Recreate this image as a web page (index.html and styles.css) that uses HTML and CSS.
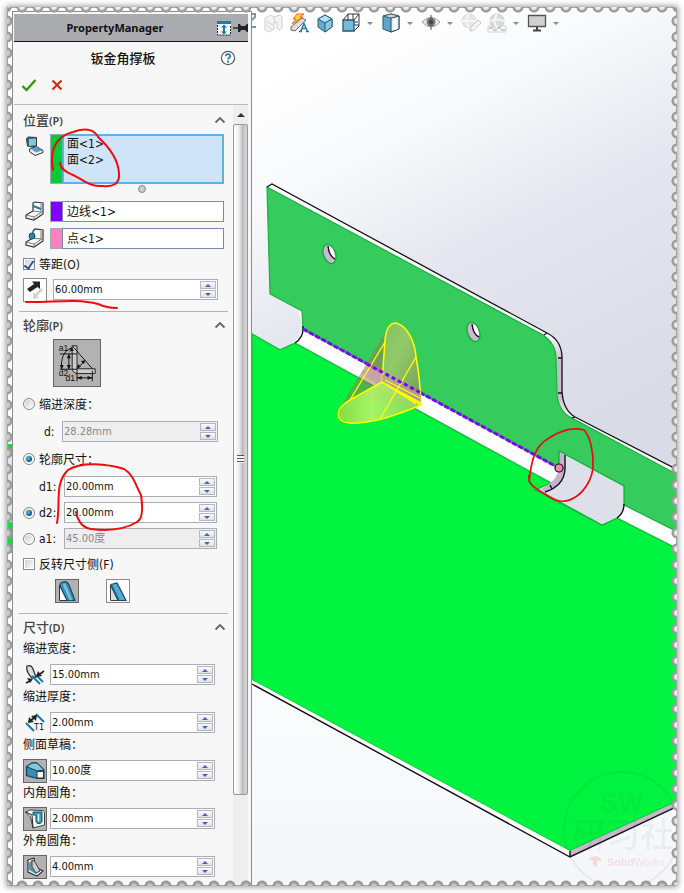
FILE: index.html
```html
<!DOCTYPE html>
<html lang="zh-CN">
<head>
<meta charset="utf-8">
<meta name="viewport" content="width=device-width, initial-scale=1">
<title>PropertyManager</title>
<link rel="stylesheet" href="styles.css">
</head>
<body>
<div class="stamp">
  <aside class="panel">
    <header class="panel-bar">
      <h1>PropertyManager</h1>
      <svg class="bar-icon" viewBox="0 0 16 16"><rect x="1" y="2" width="14" height="13" fill="#f4f4f4"/><path d="M1.5 5v10h13V5" fill="none" stroke="#222" stroke-dasharray="2 1"/><rect x="1" y="1" width="14" height="3" fill="#1f7ba6"/><path d="M8 4.500l3 3H9v4h2l-3 3-3-3h2v-4H5z" fill="#1f7ba6"/></svg>
      <svg class="pin-icon" viewBox="0 0 16 16"><path d="M1 8h6" stroke="#222" stroke-width="1.4"/><path d="M6 4h2l1 2h4l2-2h1v8h-1l-2-2H9l-1 2H6z" fill="#222"/></svg>
    </header>
    <div class="feature-title">
      <h2>钣金角撑板</h2>
      <button class="plain help" aria-label="帮助"><svg viewBox="0 0 16 16"><circle cx="8" cy="8" r="6.6" fill="#fff" stroke="#555c66" stroke-width="1.2"/><path d="M5.9 6.3c0-2.8 4.3-2.8 4.3-.2 0 1.6-2.2 1.7-2.2 3.4" fill="none" stroke="#1f7ba6" stroke-width="1.7"/><circle cx="8" cy="11.7" r="1.1" fill="#1f7ba6"/></svg></button>
    </div>
    <div class="confirm">
      <button class="plain" aria-label="确定"><svg viewBox="0 0 16 16"><path d="M1.5 9l4 4L14.500 3" fill="none" stroke="#2f9a12" stroke-width="2.4"/></svg></button>
      <button class="plain" aria-label="取消"><svg viewBox="0 0 16 16"><path d="M3.500 3.500l9 9M12.500 3.500l-9 9" fill="none" stroke="#dc2a0c" stroke-width="2.200"/></svg></button>
    </div>

    <div class="scroll-area">
      <div class="sections">
        <section class="section first">
          <button class="section-head"><span>位置<small>(P)</small></span><svg viewBox="0 0 12 8"><path d="M1.500 6.500L6 2l4.500 4.500" fill="none" stroke="#666" stroke-width="1.800"/></svg></button>
          <div class="section-body">
            <div class="pick tall">
              <svg class="row-icon" viewBox="0 0 20 20"><path d="M1.500 2.500l2-1.500 8 .5v8l-2 2-7-1.500z" fill="#2c6987" stroke="#333"/><path d="M4 3l7-.5v6.500l-7 1z" fill="#8bc3dc"/><path d="M4.500 13l7-2.500 6.500 4v2l-8 3-5.500-4z" fill="#eee" stroke="#333"/><path d="M6 13l6-2 5 3.500-6 2z" fill="#4ea3cb"/></svg>
              <span class="swatch green"></span>
              <textarea aria-label="支撑面" readonly>面&lt;1&gt;
面&lt;2&gt;</textarea>
            </div>
            <div class="grip-dot"></div>
            <div class="pick">
              <svg class="row-icon" viewBox="0 0 20 20"><path d="M1 14l7-4V2l2-1 8 1v11l-9 6-8-2z" fill="#fafafa" stroke="#333" stroke-width="1.200"/><path d="M8 10l8 1V3M1 14l8 2 8-5M9 16v3" fill="none" stroke="#777"/><path d="M8 5l8 3" stroke="#167cab" stroke-width="2"/></svg>
              <span class="swatch purple"></span>
              <input type="text" value="边线&lt;1&gt;" aria-label="边线">
            </div>
            <div class="pick">
              <svg class="row-icon" viewBox="0 0 20 20"><path d="M1 14l7-4V3l2-2 8 1v11l-9 6-8-2z" fill="#fafafa" stroke="#333" stroke-width="1.200"/><path d="M8 10l8 1V3M1 14l8 2 8-5M9 16v3" fill="none" stroke="#777"/><circle cx="7" cy="8" r="3" fill="#248ab8" stroke="#174b62"/></svg>
              <span class="swatch pink"></span>
              <input type="text" value="点&lt;1&gt;" aria-label="点">
            </div>
            <label class="choice"><input type="checkbox" checked><span>等距<small>(O)</small></span></label>
            <div class="field offset-field">
              <button class="tool" aria-label="反向"><svg viewBox="0 0 22 22"><path d="M3 10l7-5-2-2.500h8V10l-2.500-2L6 13z" fill="#222"/><path d="M19 11l-6 6 2 2.500H9V13l2 2 6-6z" fill="#d2d2d2"/></svg></button>
              <div class="spin"><input type="text" value="60.00mm" aria-label="等距值"><span class="steps"><button aria-label="增加"></button><button aria-label="减少" class="down"></button></span></div>
            </div>
          </div>
        </section>

        <section class="section">
          <button class="section-head"><span>轮廓<small>(P)</small></span><svg viewBox="0 0 12 8"><path d="M1.500 6.500L6 2l4.500 4.500" fill="none" stroke="#666" stroke-width="1.800"/></svg></button>
          <div class="section-body">
            <div class="diagram">
              <svg viewBox="0 0 48 48" font-family="Liberation Sans, sans-serif" font-size="9" fill="#111"><path d="M19 6h5v24h19v5H25c-4 0-6-2-6-6z" fill="#ccc" stroke="#222"/><path d="M19 6l21 24M6 14.500h18M6 30.500h18M24 30v13M40 32v11M24 39.500h16M15.500 15v15M19 8C10 11 7 19 8 30M25 29l7-7" fill="none" stroke="#111"/><path d="M15.500 14l-2 5h4zM15.500 31l-2-5h4zM8 31l-2-5h4zM24 39.500l5-2v4zM40 39.500l-5-2v4zM18 8l-2 4 5-1zM24 30l1-5 3 3zM33 21l-5 1 3 3z"/><text x="5" y="11">a1</text><text x="5" y="38">d2</text><text x="12" y="43">d1</text></svg>
            </div>
            <label class="choice option"><input type="radio" name="profile"><span>缩进深度<span class="colon">：</span></span></label>
            <div class="field dim depth"><label for="depth">d:</label>
              <div class="spin off"><input id="depth" type="text" value="28.28mm" disabled><span class="steps"><button aria-label="增加"></button><button aria-label="减少" class="down"></button></span></div></div>
            <label class="choice option"><input type="radio" name="profile" checked><span>轮廓尺寸<span class="colon">：</span></span></label>
            <div class="dims">
              <div class="field dim"><i></i><label for="d1">d1:</label>
                <div class="spin"><input id="d1" type="text" value="20.00mm"><span class="steps"><button aria-label="增加"></button><button aria-label="减少" class="down"></button></span></div></div>
              <div class="field dim"><input type="radio" name="leg" checked aria-label="d2"><label for="d2">d2:</label>
                <div class="spin"><input id="d2" type="text" value="20.00mm"><span class="steps"><button aria-label="增加"></button><button aria-label="减少" class="down"></button></span></div></div>
              <div class="field dim"><input type="radio" name="leg" aria-label="a1"><label for="a1">a1:</label>
                <div class="spin off"><input id="a1" type="text" value="45.00度" disabled><span class="steps"><button aria-label="增加"></button><button aria-label="减少" class="down"></button></span></div></div>
            </div>
            <label class="choice"><input type="checkbox"><span>反转尺寸侧<small>(F)</small></span></label>
            <div class="shapes">
              <button class="tool active" aria-label="圆形缩进"><svg viewBox="0 0 22 22"><path d="M3.500 5v15.500H12z" fill="#fff" stroke="#333"/><path d="M4 6c0-5 7-6 9-1l6 15.500h-8z" fill="#3b8fb6" stroke="#164a60" stroke-width="1.200"/><path d="M8 4l7 16" stroke="#7fc2dd" stroke-width="2.500"/></svg></button>
              <button class="tool" aria-label="平面缩进"><svg viewBox="0 0 22 22"><path d="M3.500 5v15.500H11z" fill="#ddd" stroke="#444"/><path d="M4 4.500L10 3l9 17.500h-8z" fill="#52aad0" stroke="#164a60" stroke-width="1.200"/><path d="M4 5l7.500 15" stroke="#1f5f7c" stroke-width="2"/></svg></button>
            </div>
          </div>
        </section>

        <section class="section sizes">
          <button class="section-head"><span>尺寸<small>(D)</small></span><svg viewBox="0 0 12 8"><path d="M1.500 6.500L6 2l4.500 4.500" fill="none" stroke="#666" stroke-width="1.800"/></svg></button>
          <div class="size"><label for="w">缩进宽度<span class="colon">：</span></label>
            <div class="field"><span class="tool bare"><svg viewBox="0 0 22 22"><path d="M3 2c3-1 5 0 6 3l3 8-4 1C4 10 2 6 3 2z" fill="#ddd" stroke="#333" stroke-width="1.300"/><path d="M8 12l8 8M12 11l7 7" stroke="#187aa6" stroke-width="1.800"/><path d="M20 7l-4 3" stroke="#222" stroke-width="1.600"/><path d="M12 13l2-6 4 5zM9 15l-6-1 3 5z" fill="#222"/><path d="M2 19l4-2" stroke="#222" stroke-width="1.600"/></svg></span>
            <div class="spin"><input id="w" type="text" value="15.00mm"><span class="steps"><button aria-label="增加"></button><button aria-label="减少" class="down"></button></span></div></div></div>
          <div class="size"><label for="t">缩进厚度<span class="colon">：</span></label>
            <div class="field"><span class="tool bare"><svg viewBox="0 0 22 22"><path d="M12 2l8 8M2 11l8 8" stroke="#187aa6" stroke-width="2"/><path d="M5 10l7-6" stroke="#222" stroke-width="2"/><path d="M13 3l-1 6-5-5zM4 11l1-6 5 5z" fill="#222"/><text x="10" y="18" font-family="DejaVu Sans Condensed, sans-serif" font-size="9" fill="#111">T1</text></svg></span>
            <div class="spin"><input id="t" type="text" value="2.00mm"><span class="steps"><button aria-label="增加"></button><button aria-label="减少" class="down"></button></span></div></div></div>
          <div class="size"><label for="s">侧面草稿<span class="colon">：</span></label>
            <div class="field"><button class="tool active" aria-label="侧面草稿"><svg viewBox="0 0 22 22"><path d="M2.500 6.500L8 3h5l7 7v8.500h-7l-10.500-3z" fill="#378eb8" stroke="#103e54" stroke-width="1.200"/><path d="M2.500 6.500L8 3h5l7 7-7 1z" fill="#86c5df" stroke="#103e54"/><path d="M13 11.500h6.500v6.500H13z" fill="#f6f6f6" stroke="#333"/></svg></button>
            <div class="spin"><input id="s" type="text" value="10.00度"><span class="steps"><button aria-label="增加"></button><button aria-label="减少" class="down"></button></span></div></div></div>
          <div class="size"><label for="in">内角圆角<span class="colon">：</span></label>
            <div class="field"><button class="tool active" aria-label="内角圆角"><svg viewBox="0 0 22 22"><path d="M1.500 4L6 2l13 .5 1.500 2V17L9 20 6.500 9z" fill="#f5f5f5" stroke="#444"/><path d="M1.500 4L8 7l1 13" fill="none" stroke="#222"/><path d="M9 4h9v9c0 3-6 4-6 0V7H9z" fill="#409bc0" stroke="#14516c"/><path d="M14.500 6v7" fill="none" stroke="#e3f2f8" stroke-width="1.500"/></svg></button>
            <div class="spin"><input id="in" type="text" value="2.00mm"><span class="steps"><button aria-label="增加"></button><button aria-label="减少" class="down"></button></span></div></div></div>
          <div class="size"><label for="out">外角圆角<span class="colon">：</span></label>
            <div class="field"><button class="tool active" aria-label="外角圆角"><svg viewBox="0 0 22 22"><path d="M4 4l6-2 1 9 8 4-6 5-9-4z" fill="#f7f7f7" stroke="#333" stroke-width="1.200"/><path d="M5 7c3-4 5-2 5 1l6 7-4 3-7-4z" fill="#469dc0"/><path d="M8 4l3 2 5 9-4 2-4-6z" fill="#ccc" stroke="#444"/></svg></button>
            <div class="spin"><input id="out" type="text" value="4.00mm"><span class="steps"><button aria-label="增加"></button><button aria-label="减少" class="down"></button></span></div></div></div>
        </section>
      </div>
      <div class="scrollbar"><span class="up"></span><div class="thumb"><span></span></div></div>
    </div>
    <svg class="marks" viewBox="12 11 240 875" width="240" height="875" fill="none" stroke="#f00c0c" stroke-width="2" stroke-linecap="round"><path d="M53 170C49 149 57 136 73 132C88 127 94 130 99 138C111 149 118 160 119 173C120 184 113 187 103 186C90 187 84 180 73 175C65 172 61 169 60 163"/><path d="M26 302C50 303 75 298 98 304Q107 308 117 308"/><path d="M57 523C61 501 54 484 68 470C82 461 108 464 124 469C133 474 136 486 141 495C143 508 143 519 137 522C124 530 107 531 91 529C81 528 77 518 76 512"/></svg>
  </aside>

  <main class="viewport">
    <svg class="scene" viewBox="252 8 424 877" preserveAspectRatio="xMinYMin slice">
      <defs>
        <linearGradient id="sky" gradientUnits="userSpaceOnUse" x1="300" y1="60" x2="500" y2="460"><stop offset="0" stop-color="#fff"/><stop offset=".25" stop-color="#f8f9fb"/><stop offset=".55" stop-color="#e4e7ef"/><stop offset="1" stop-color="#d9dce7"/></linearGradient>
        <linearGradient id="floor" x1="0" y1="0" x2="0" y2="1"><stop offset="0" stop-color="#fff"/><stop offset="1" stop-color="#f5f6fa"/></linearGradient>
        <linearGradient id="lobe" x1="0" y1="0" x2="1" y2="1"><stop offset="0" stop-color="#8fbf60"/><stop offset=".4" stop-color="#9dca69"/><stop offset="1" stop-color="#789557"/></linearGradient>
        <linearGradient id="foot" x1="0" y1="0" x2="1" y2="0"><stop offset="0" stop-color="#8fdd43"/><stop offset=".4" stop-color="#b7f56b"/><stop offset="1" stop-color="#8bd35a"/></linearGradient>
        <linearGradient id="bend" x1="0" y1="0" x2="0" y2="1"><stop offset="0" stop-color="#fff"/><stop offset=".35" stop-color="#cbb7ce"/><stop offset=".75" stop-color="#cbb7ce"/><stop offset="1" stop-color="#fff"/></linearGradient>
      </defs>
      <rect x="252" y="8" width="426" height="560" fill="url(#sky)"/>
      <rect x="252" y="560" width="426" height="326" fill="url(#floor)"/>
      <path d="M267 187l5-3L547 333Q561 340 562 356V391Q563 410 575 417L678 470V550L617 518 545 492 295 343 303 329z" fill="#fff"/>
      <path d="M543 335L547 333Q561 340 562 356V391Q563 410 575 417L571 418Q557 410 557 395L556 358Q556 344 543 335z" fill="url(#bend)"/>
      <path d="M267 187L543 335Q556 344 556 358L557 395Q559 412 572 418L678 475V532L624 505V486L559 451V468L303 329 302 311 270 294z" fill="#35cc5d" stroke="#17b13d" stroke-width="1.200"/>
      <path d="M267 187l5-3L547 333Q561 340 562 356V391Q563 410 575 417L678 470M558 358h4M558 393h4M544 335l3-2M572 418l3-1" fill="none" stroke="#111" stroke-width="1.300"/>
      <path d="M252 334L280 350 295 343 551 483 535 490 602 525 617 518 678 549V801L570 851 252 680z" fill="#00f33e" stroke="#16c23e" stroke-width="1.500"/>
      <path d="M565 454L624 486V505Q624 513 617 518L602 525 545 492Q565 482 565 468z" fill="#dde0e9"/>
      <path d="M559 451L624 486V505M617 518L602 525 545 494" fill="none" stroke="#17b13d" stroke-width="1.300"/>
      <path d="M303 326Q304 337 295 343M624 504Q624 513 617 518" fill="none" stroke="#111" stroke-width="1.400"/>
      <path d="M559 452l6 3v15Q563 486 545 492l-4-3Q559 480 559 466z" fill="#c9b2cf"/>
      <path d="M565 455v14Q564 486 545 492M550 485l2 4" fill="none" stroke="#111" stroke-width="1.400"/>
      <path d="M559 468V451" stroke="#17b13d" stroke-width="1.300"/>
      <path d="M252 680L570 851v6L252 684z" fill="#fff"/>
      <path d="M570 851L678 801v5L570 857z" fill="#c9b7ce"/>
      <path d="M252 684L570 857 678 806M570 851v6" fill="none" stroke="#111" stroke-width="1.400"/>
      <path d="M303 329L559 468" stroke="#18a93c" stroke-width="2"/>
      <path d="M303 329L559 468" stroke="#7f00ff" stroke-width="3" stroke-dasharray="5 2"/>
      <g id="holes"><ellipse cx="329.500" cy="254" rx="6" ry="10" transform="rotate(-20 329.500 254)" fill="#cbb7ce" stroke="#13a93a" stroke-width="1.300"/><path d="M329 246q6 2 6 13-6-4-6-13z" fill="#fff"/><path d="M328 246q1 10 7 13" fill="none" stroke="#111" stroke-width="1.400"/></g>
      <use href="#holes" x="144" y="78"/>
      <path d="M385 333L341 406 350 401 421 403 382 382z" fill="#9f7350" fill-opacity=".5"/>
      <path d="M361 373l10-10 50 26v16l-10 3z" fill="#b994a0" fill-opacity=".5"/>
      <path d="M382 382L385 340C386 329 390 323 396 323C408 326 415 343 416 357Q420 379 421 403z" fill="url(#lobe)" fill-opacity=".9" stroke="#ff0" stroke-width="1.500"/>
      <path d="M382 382L350 400C339 407 337 411 339 418C342 424 354 424 366 422Q385 420 421 405z" fill="url(#foot)" fill-opacity=".9" stroke="#ff0" stroke-width="1.500"/>
      <path d="M382 374L421 394V403L382 382z" fill="#bd9d9d" fill-opacity=".7"/>
      <path d="M385 342L350 400M416 357L380 419M382 382L421 403M382 382l34 22M385 380l35 18" fill="none" stroke="#ff0" stroke-width="1.400"/>
      <path d="M367 364L421 393" stroke="#7f00ff" stroke-width="3" stroke-dasharray="4 3"/>
      <circle cx="559" cy="468" r="4" fill="#ff80b8" stroke="#111" stroke-width="1.200"/>
      <g fill="#34594a" fill-opacity=".07" font-family="Noto Sans CJK SC, sans-serif" text-anchor="middle"><circle cx="622" cy="830" r="58" fill="none" stroke="#345" stroke-opacity=".07" stroke-width="2"/><text x="622" y="812" font-family="Liberation Sans, sans-serif" font-weight="700" font-size="27">SW</text><text x="623" y="847" font-size="34" font-weight="500">研习社</text></g>
      <g fill="#d33" fill-opacity=".14"><path d="M589 858l6-2 6 2v3h-4v6l-4-2v-5h-4z"/><text x="607" y="866" font-family="Liberation Sans, sans-serif" font-size="11"><tspan font-weight="700">Solid</tspan>Works</text></g>
      <path d="M529 482C531 463 534 446 549 438C560 431 573 427 584 430C590 436 594 453 593 467C592 480 584 491 577 496C566 504 557 502 548 496C538 489 527 486 529 475" fill="none" stroke="#e80c12" stroke-width="1.700"/>
    </svg>
    <nav class="toolbar">
      <svg class="cut" viewBox="0 0 5 20"><path d="M0 1h3v3L0 7M0 14h4" fill="none" stroke="#7799aa" stroke-width="2"/></svg>
      <button class="plain" aria-label="剖面"><svg viewBox="0 0 20 20" opacity=".35"><path d="M2 5l6-3 3 2 6-2 2 2v11l-3 2-2-2v-6l-3 1v6l-5 3-4-2z" fill="#ddd" stroke="#777"/><path d="M3 8l7 4M3 12l7 5M11 4l1 5" stroke="#888"/></svg></button>
      <button class="plain" aria-label="注解视图"><svg viewBox="0 0 20 20"><path d="M2 14L13 5l4 2-11 11-4-1z" fill="#ddd" stroke="#666"/><path d="M8 1h7l-4 3h3L3 11l4-5H4z" fill="#ffd531" stroke="#e96818"/><path d="M11.500 18.500l3.500-8 3.500 8M13 15.500h4M10 18.500h3M17 18.500h3" fill="none" stroke="#28769e" stroke-width="1.500"/></svg></button>
      <button class="plain" aria-label="视图"><svg viewBox="0 0 20 20"><path d="M10 2l7 4v8l-7 5-7-5V6z" fill="#62a9cb" stroke="#285d78"/><path d="M10 2l7 4-7 4-7-4z" fill="#b6dff0" stroke="#285d78"/><path d="M10 10l7-4v8l-7 5z" fill="#8fc9e1" stroke="#285d78"/></svg></button>
      <div class="split"><button class="plain" aria-label="视图定向"><svg viewBox="0 0 20 20"><path d="M2 7l5-6h11v12l-5 5M13 7l5-6M7 1v6M12 1v6M13 12h5M17 9h-4" fill="none" stroke="#333"/><path d="M2 7h11v11H2z" fill="#77bada" stroke="#245a75" stroke-width="1.300"/></svg></button><span class="caret"></span></div>
      <div class="split"><button class="plain" aria-label="显示样式"><svg viewBox="0 0 20 20"><path d="M2 3l8-2 8 2v13l-8 3-8-3z" fill="#5aa7cb" stroke="#29596f"/><path d="M10 5l8-2v13l-8 3z" fill="#dff0f7" stroke="#345"/><path d="M2 3l8 2 8-2-8-2z" fill="#c7dfe9" stroke="#456"/><path d="M14 5v12" stroke="#fff" stroke-width="3"/></svg></button><span class="caret"></span></div>
      <div class="split"><button class="plain" aria-label="隐藏"><svg viewBox="0 0 20 20"><path d="M1 9q9-9 18 0-9 10-18 0z" fill="#eee" stroke="#999"/><circle cx="10" cy="9" r="4.500" fill="#777"/><circle cx="10" cy="9" r="2" fill="#333"/><path d="M10 2v15" stroke="#555"/></svg></button><span class="caret"></span></div>
      <button class="plain" aria-label="外观"><svg viewBox="0 0 20 20" opacity=".45"><circle cx="8" cy="8" r="7" fill="#ccc" stroke="#aaa"/><path d="M1 8h14M8 1q-5 7 0 14" fill="none" stroke="#eee" stroke-width="2"/><path d="M9 18l1-4 7-7 3 3-7 7z" fill="#eee" stroke="#888"/></svg></button>
      <div class="split"><button class="plain" aria-label="布景"><svg viewBox="0 0 20 20" opacity=".5"><path d="M1 13h18v6H1z" fill="#fff" stroke="#aaa"/><path d="M2 14h4v2h4v-2h4v2h4v2h-4v-2h-4v2H6v-2H2z" fill="#999"/><circle cx="10" cy="8" r="7" fill="#bbb" stroke="#999"/><path d="M3 8q7-3 14 0M10 1q-5 7 0 14" fill="none" stroke="#eee" stroke-width="2"/></svg></button><span class="caret"></span></div>
      <div class="split"><button class="plain" aria-label="视图设定"><svg viewBox="0 0 20 20"><path d="M1.500 2.500h17v11h-17z" fill="#d0d0d0" stroke="#555" stroke-width="1.300"/><path d="M10 14v3M6 17.500h8" stroke="#444" stroke-width="2"/></svg></button><span class="caret"></span></div>
    </nav>
  </main>
  <div class="edge top"></div><div class="edge bottom"></div><div class="edge left"></div><div class="edge right"></div>
</div>
</body>
</html>
```
FILE: styles.css
```css
* { box-sizing: border-box; }
body {
  margin: 0;
  padding: 7px;
  background: #fff;
  color: #111;
  font: 11px/16px "DejaVu Sans Condensed", "Noto Sans CJK SC", sans-serif;
}
button, input, textarea { font: inherit; color: inherit; margin: 0; padding: 0; }
h1, h2 { margin: 0; }
svg { display: block; }
.plain { width: 20px; height: 20px; border: 0; background: none; }
.plain svg { width: 100%; height: 100%; }

.stamp {
  position: relative;
  display: flex;
  min-height: calc(100vh - 14px);
  padding-left: 4px;
  border: 1px solid #a4a4a4;
  background: linear-gradient(#fff 436px, #19d94b 436px 440px, #e3e6ee 448px 514px, #00e83b 514px 545px, #fff 545px);
  box-shadow: 0 0 6px 1px #999;
}

.panel {
  position: relative;
  flex: none;
  display: flex;
  flex-direction: column;
  width: 240px;
  margin-top: 3px;
  padding: 2px 3px 0 1px;
  border: 1px solid #8c8c8c;
  border-bottom: 0;
  background: #f7f7f7;
}
.panel-bar {
  display: flex;
  align-items: center;
  height: 28px;
  border-bottom: 1px solid #111;
  background: #aaacb0;
}
.panel-bar h1 {
  flex: 1;
  text-align: center;
  font: 700 11px/20px "Noto Sans", sans-serif;
}
.bar-icon, .pin-icon { width: 16px; height: 16px; }
.feature-title {
  display: flex;
  align-items: center;
  height: 32px;
  padding: 0 12px 0 12px;
}
.feature-title h2 {
  flex: 1;
  text-align: center;
  font: 500 13px/20px "Noto Sans CJK SC", sans-serif;
}
.plain.help { width: 16px; height: 16px; }
.confirm {
  display: flex;
  gap: 12px;
  height: 31px;
  padding: 3px 7px;
  border-bottom: 1px solid #bbb;
}
.confirm .plain { width: 16px; height: 16px; }

.scroll-area { flex: 1; display: flex; }
.sections { flex: 1; padding: 0 5px; }
.section { padding-bottom: 10px; border-bottom: 1px solid #b4b4b4; }
.section.first { padding: 2px 0 11px; }
.section.sizes { padding-bottom: 0; border: 0; }
.section-head {
  display: flex;
  justify-content: space-between;
  align-items: center;
  width: 100%;
  height: 24px;
  padding: 2px 2px 0 4px;
  border: 0;
  background: none;
  color: #444;
  font: 500 13px/20px "Noto Sans CJK SC", sans-serif;
}
.section-head svg { width: 12px; height: 8px; }
small { font: 12px "DejaVu Sans Condensed", sans-serif; }
.section-head small { font: 600 11px "Noto Sans", sans-serif; }
.section-body { padding-top: 3px; }

.pick { display: flex; height: 21px; margin: 0 4px 0 6px; }
.pick + .pick { margin-top: 6px; }
.pick.tall { height: 50px; }
.row-icon { flex: none; width: 20px; height: 20px; margin-right: 5px; }
.pick.tall .row-icon { margin-top: 2px; }
.swatch { width: 12px; border: 1px solid #a0a8b0; border-right: 0; }
.green { background: #0c3; }
.purple { background: #7f00ff; }
.pink { background: #ff80c0; }
.pick input, .pick textarea {
  flex: 1;
  min-width: 0;
  padding: 0 4px;
  border: 1px solid #7d8ca6;
  border-radius: 0;
  background: #fff;
  font: 12px/16px "DejaVu Sans Condensed", "Noto Sans CJK SC", sans-serif;
  outline: 0;
}
.pick textarea {
  padding: 0 3px;
  border: 2px solid #5eb1e6;
  background: #cfe4f8;
  resize: none;
  overflow: hidden;
}
.grip-dot { height: 17px; padding: 1px 0 0 37px; }
.grip-dot::before {
  content: "";
  display: block;
  width: 6px;
  height: 6px;
  margin: 0 auto;
  border: 1px solid #888;
  border-radius: 50%;
  background: #ccc;
}

.choice { display: flex; align-items: center; gap: 4px; height: 30px; padding-left: 4px; font: 12px/20px "Noto Sans CJK SC", sans-serif; }
.choice.option { height: 34px; }
.colon { font-family: "Noto Sans CJK TC", sans-serif; }
input[type="checkbox"], input[type="radio"] {
  appearance: none;
  flex: none;
  display: grid;
  place-items: center;
  width: 12px;
  height: 12px;
  border: 1px solid #85888c;
  background: linear-gradient(135deg, #ccc, #fff);
  box-shadow: inset 0 0 0 1px #fff;
}
input[type="radio"] { border-radius: 50%; }
input[type="checkbox"]:checked::before {
  content: "";
  width: 4px;
  height: 8px;
  border: solid #394e9c;
  border-width: 0 2px 2px 0;
  transform: rotate(35deg);
}
input[type="radio"]:checked::before {
  content: "";
  width: 6px;
  height: 6px;
  border-radius: 50%;
  background: radial-gradient(circle at 35% 35%, #5cc0ec, #123f66 80%);
}

.field { display: flex; align-items: center; height: 21px; }
.spin {
  flex: 1;
  display: flex;
  height: 21px;
  padding: 1px;
  border: 1px solid #a9adb5;
  background: #fff;
}
.spin > input { flex: 1; min-width: 0; border: 0; background: none; outline: 0; }
.spin.off { background: #eee; color: #888; }
.steps { display: flex; flex-direction: column; gap: 1px; width: 16px; }
.steps button {
  flex: 1;
  display: grid;
  place-items: center;
  border: 1px solid #b4b7bd;
  background: linear-gradient(#fafafa, #dfe1e6);
}
.steps button::before {
  content: "";
  border: 3px solid transparent;
  border-top-width: 0;
  border-bottom-color: #4b62b2;
}
.steps .down::before { border-top: 3px solid #4b62b2; border-bottom: 0; }
.tool { flex: none; width: 24px; height: 24px; border: 1px solid #8c8c8c; background: #fff; }
.tool svg { width: 22px; height: 22px; }
.tool.active { border: 1px solid #666; background: #b2b2b2; }
.tool.bare { border-color: transparent; background: none; }
.offset-field { gap: 6px; padding: 0 10px 0 4px; }

.diagram { width: 48px; height: 48px; margin-left: 34px; border: 1px solid #666; background: #b2b2b2; }
.diagram svg { width: 46px; height: 46px; }
.dim { gap: 4px; padding: 0 11px 0 4px; }
.dim > i { width: 12px; }
.dim label { width: 21px; font-size: 12px; }
.depth { padding: 0 10px 0 25px; gap: 0; }
.depth label { width: 18px; }
.dims { display: grid; gap: 5px; }
.shapes { display: flex; gap: 27px; padding-left: 36px; }

.size { margin-bottom: 1px; padding: 0 13px 0 4px; }
.size > label { display: block; padding-bottom: 6px; font: 12px/20px "Noto Sans CJK SC", sans-serif; }
.size .field { gap: 3px; }

.scrollbar { display: flex; flex-direction: column; align-items: center; width: 15px; background: #eee; }
.up { height: 19px; padding-top: 8px; }
.up::before { content: ""; display: block; border: 4px solid transparent; border-top: 0; border-bottom-color: #333; }
.thumb {
  flex: 0 0 86%;
  display: grid;
  place-items: center;
  width: 15px;
  border: 1px solid #96969a;
  border-radius: 2px;
  background: linear-gradient(90deg, #fff, #ececec 40%, #bbbbc0 65%, #dadada);
}
.thumb span { width: 7px; height: 8px; background: repeating-linear-gradient(#555 0 1px, #f7f7f7 1px 3px); }
.marks { position: absolute; top: -1px; left: -1px; pointer-events: none; }

.viewport { position: relative; flex: 1; min-width: 0; overflow: hidden; background: #fff; }
.scene { position: absolute; inset: 0; width: 100%; height: 100%; }
.toolbar { position: absolute; top: 5px; left: 0; display: flex; gap: 6px; }
.cut { width: 5px; height: 20px; }
.split { display: flex; align-items: center; }
.caret { width: 14px; padding-left: 6px; }
.caret::before { content: ""; display: block; width: 0; border: 3px solid transparent; border-bottom: 0; border-top-color: #888; }

.edge { position: absolute; pointer-events: none; }
.top, .bottom { left: 0; right: 0; height: 7px; background-size: 16px 7px; background-position-x: 6px; }
.left, .right { top: 0; bottom: 0; width: 7px; background-size: 7px 16px; background-position-y: 5px; }
.top { top: -1px; background-image: radial-gradient(circle at 8px 0, #eee 2px, #999 4px 5px, transparent 6px); }
.bottom { bottom: -1px; background-image: radial-gradient(circle at 8px 7px, #ccc 1px, #999 4px 5px, transparent 6px); }
.left { left: -1px; background-image: radial-gradient(circle at 0 8px, #ccc 2px, #999 4px 5px, transparent 6px); }
.right { right: -1px; background-image: radial-gradient(circle at 7px 8px, #eee 2px, #999 4px 5px, transparent 6px); }
```
